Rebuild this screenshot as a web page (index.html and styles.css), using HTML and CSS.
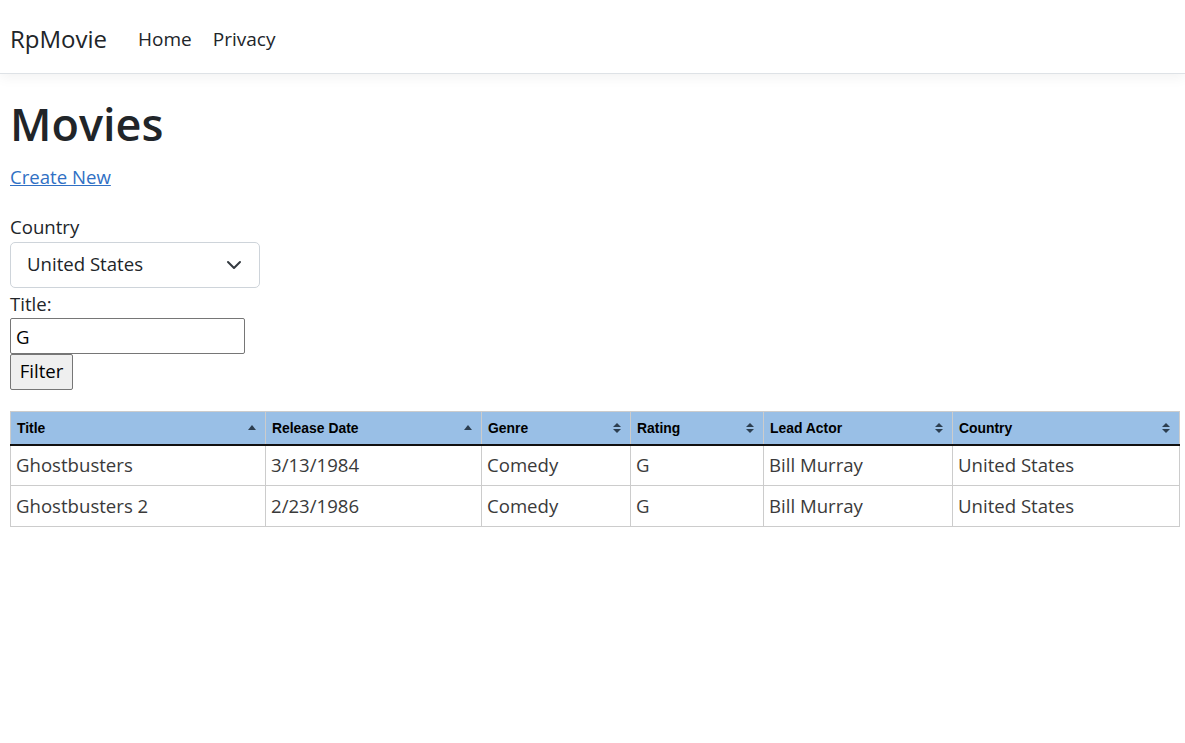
FILE: index.html
```html
<!DOCTYPE html>
<html lang="en">
<head>
<meta charset="utf-8">
<title>Index - RpMovie</title>
<link rel="stylesheet" href="styles.css">
</head>
<body>
<header class="topbar">
  <nav class="navbar">
    <a class="brand" href="#">RpMovie</a>
    <ul class="nav-links">
      <li><a href="#">Home</a></li>
      <li><a href="#">Privacy</a></li>
    </ul>
  </nav>
</header>
<main class="page">
  <h1 class="title">Movies</h1>
  <p class="create"><a href="#">Create New</a></p>
  <form class="filter">
    <label class="lbl">Country</label>
    <div class="select">
      <span>United States</span>
      <svg class="chev" width="16" height="16" viewBox="0 0 16 16"><path d="M2 5l6 6 6-6" fill="none" stroke="#343a40" stroke-width="2" stroke-linecap="round" stroke-linejoin="round"/></svg>
    </div>
    <label class="lbl lbl-title">Title:</label>
    <input class="text-input" type="text" value="G">
    <button class="btn" type="button">Filter</button>
  </form>
  <table class="grid">
    <colgroup>
      <col class="c1"><col class="c2"><col class="c3"><col class="c4"><col class="c5"><col class="c6">
    </colgroup>
    <thead>
      <tr>
        <th><div class="th"><span>Title</span><span class="sort up"></span></div></th>
        <th><div class="th"><span>Release Date</span><span class="sort up"></span></div></th>
        <th><div class="th"><span>Genre</span><span class="sort both"></span></div></th>
        <th><div class="th"><span>Rating</span><span class="sort both"></span></div></th>
        <th><div class="th"><span>Lead Actor</span><span class="sort both"></span></div></th>
        <th><div class="th"><span>Country</span><span class="sort both"></span></div></th>
      </tr>
    </thead>
    <tbody>
      <tr><td>Ghostbusters</td><td>3/13/1984</td><td>Comedy</td><td>G</td><td>Bill Murray</td><td>United States</td></tr>
      <tr><td>Ghostbusters 2</td><td>2/23/1986</td><td>Comedy</td><td>G</td><td>Bill Murray</td><td>United States</td></tr>
    </tbody>
  </table>
</main>
</body>
</html>
```
FILE: styles.css
```css
* { box-sizing: border-box; }
html, body { margin: 0; padding: 0; }
body {
  font-family: "Segoe UI", "Open Sans", "Noto Sans", sans-serif;
  font-size: 18.6px;
  line-height: 28.8px;
  color: #212529;
  background: #fff;
}
a { color: #3070c4; }
.topbar {
  height: 74px;
  border-bottom: 1px solid #dee2e6;
  box-shadow: 0 4px 12px rgba(0,0,0,0.05);
}
.navbar {
  height: 73px;
  display: flex;
  align-items: center;
  padding: 6px 10px 0;
}
.brand {
  font-size: 24px;
  color: #212529;
  text-decoration: none;
  margin-right: 21px;
}
.nav-links {
  display: flex;
  list-style: none;
  margin: 0;
  padding: 0;
}
.nav-links a {
  display: block;
  padding: 8px 10px;
  font-size: 19px;
  color: #212529;
  text-decoration: none;
}
.nav-links li + li a { padding-left: 11px; }
.page { padding: 0 10px; }
.title {
  font-size: 45px;
  font-weight: 600;
  line-height: 1.2;
  margin: 23px 0 12px;
}
.create { margin: 0 0 21px; }
.filter { display: flex; flex-direction: column; align-items: flex-start; }
.lbl { display: block; line-height: 28.8px; }
.lbl-title { margin-top: 2px; }
.select {
  width: 250px;
  height: 46px;
  border: 1px solid #ced4da;
  border-radius: 5px;
  display: flex;
  align-items: center;
  justify-content: space-between;
  padding: 0 17px 0 16px;
}
.chev { margin-top: 1px; }
.text-input {
  margin-top: 0;
  width: 235px;
  height: 36px;
  border: 1px solid #767676;
  border-radius: 2px;
  font: inherit;
  padding: 0 5px;
  color: #000;
}
.btn {
  width: 63px;
  height: 36px;
  margin-top: 0;
  border: 1px solid #767676;
  border-radius: 2px;
  background: #efefef;
  font: inherit;
  color: #000;
  padding: 0 0 1px;
}
.grid {
  margin-top: 21px;
  width: 1169px;
  table-layout: fixed;
  border-collapse: collapse;
}
.c1 { width: 255px; }
.c2 { width: 216px; }
.c3 { width: 149px; }
.c4 { width: 133px; }
.c5 { width: 189px; }
.c6 { width: 227px; }
.grid th {
  background: #99bfe6;
  border: 1px solid #ccc;
  border-bottom: 2px solid #111;
  font-family: "Liberation Sans", Arial, sans-serif;
  font-size: 13.9px;
  font-weight: bold;
  color: #000;
  text-align: left;
  height: 33px;
  padding: 0 8px 0 6px;
}
.th { display: flex; align-items: center; justify-content: space-between; }
.sort { display: inline-block; width: 9px; height: 10px; position: relative; }
.sort.up::before {
  content: ""; position: absolute; left: 0; top: 2px;
  border-left: 4.5px solid transparent; border-right: 4.5px solid transparent;
  border-bottom: 5px solid #2c3e50;
}
.sort.both::before, .sort.both::after {
  content: ""; position: absolute; left: 0;
  border-left: 4.5px solid transparent; border-right: 4.5px solid transparent;
}
.sort.both::before { top: 0; border-bottom: 4px solid #2c3e50; }
.sort.both::after { top: 6px; border-top: 4px solid #2c3e50; }
.grid td {
  border: 1px solid #ccc;
  height: 41px;
  padding: 0 5px;
  white-space: nowrap;
  color: #3a3a3a;
}
```
